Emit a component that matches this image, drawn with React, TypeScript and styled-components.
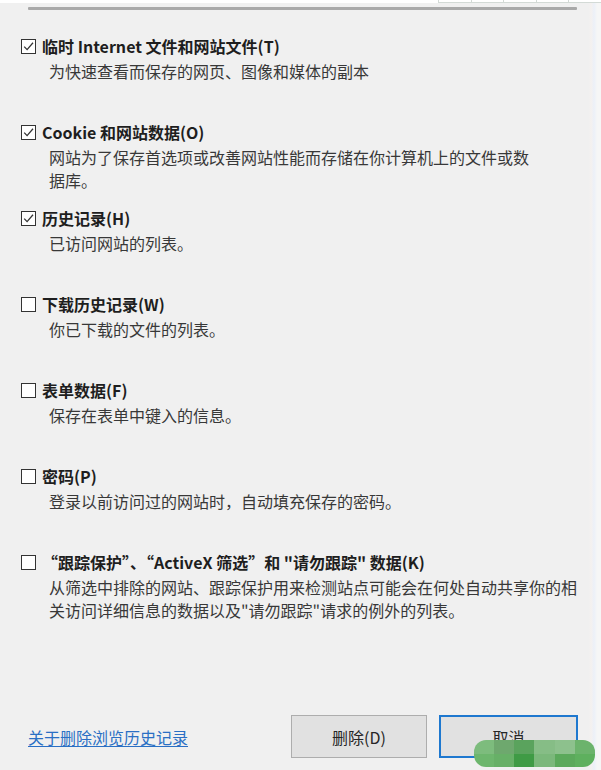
import styled, {createGlobalStyle} from 'styled-components';

type Option = {
    label: string;
    lines: string[];
    checked: boolean;
};

const options: Option[] = [
    {label: '临时 Internet 文件和网站文件(T)', lines: ['为快速查看而保存的网页、图像和媒体的副本'], checked: true},
    {label: 'Cookie 和网站数据(O)', lines: ['网站为了保存首选项或改善网站性能而存储在你计算机上的文件或数', '据库。'], checked: true},
    {label: '历史记录(H)', lines: ['已访问网站的列表。'], checked: true},
    {label: '下载历史记录(W)', lines: ['你已下载的文件的列表。'], checked: false},
    {label: '表单数据(F)', lines: ['保存在表单中键入的信息。'], checked: false},
    {label: '密码(P)', lines: ['登录以前访问过的网站时，自动填充保存的密码。'], checked: false},
    {
        label: '“跟踪保护”、“ActiveX 筛选”和 "请勿跟踪" 数据(K)',
        lines: ['从筛选中排除的网站、跟踪保护用来检测站点可能会在何处自动共享你的相', '关访问详细信息的数据以及"请勿跟踪"请求的例外的列表。'],
        checked: false,
    },
];

// mosaic watermark colours, two rows
const mosaic = [
    '#7dbc7d', '#6ea86e', '#5aa35d', '#86bd86', '#8dc18d', '#6cb36c',
    '#6db66d', '#67b067', '#3f9b45', '#7bb87b', '#5ba95b', '#5eb05e',
];

const App = () => {
    return (
        <>
            <GlobalStyle />
            <StyledWindow>
                <StyledTopStrip>
                    <StyledCells>
                        {[0, 1, 2, 3, 4].map((i) => <span key={i} />)}
                    </StyledCells>
                </StyledTopStrip>
                <StyledRule />
                <StyledList>
                    {options.map((opt) => (
                        <StyledItem key={opt.label}>
                            <StyledLabelRow>
                                <StyledBox>
                                    {opt.checked && (
                                        <svg width="13" height="13" viewBox="0 0 13 13">
                                            <path d="M2.2 6.6 L5.1 9.6 L11 2.8" fill="none" stroke="#333" strokeWidth="1.3" />
                                        </svg>
                                    )}
                                </StyledBox>
                                <StyledLabel>{opt.label}</StyledLabel>
                            </StyledLabelRow>
                            <StyledDesc>
                                {opt.lines.map((line) => <div key={line}>{line}</div>)}
                            </StyledDesc>
                        </StyledItem>
                    ))}
                </StyledList>
                <StyledFooter>
                    <StyledLink href="#">关于删除浏览历史记录</StyledLink>
                    <StyledButtons>
                        <StyledButton type="button">删除(D)</StyledButton>
                        <StyledButton type="button" $primary>取消</StyledButton>
                    </StyledButtons>
                </StyledFooter>
                <StyledMosaic>
                    {mosaic.map((c, i) => <span key={i} style={{background: c}} />)}
                </StyledMosaic>
            </StyledWindow>
        </>
    );
};

export default App;

const GlobalStyle = createGlobalStyle`
    html, body {
        margin: 0;
        padding: 0;
        background: #f0f0f0;
    }
    body {
        font-family: "Noto Sans CJK SC", "Noto Sans", sans-serif;
    }
`;

const StyledWindow = styled.div`
    position: relative;
    width: 601px;
    height: 770px;
    overflow: hidden;
    display: flex;
    flex-direction: column;
    background: linear-gradient(to right, #f0f0f0 589px, #f5f1ef 591px, #ecf0f8 594px, #f6f6f6 597px);
    box-sizing: border-box;
`;

const StyledTopStrip = styled.div`
    height: 3px;
    display: flex;
    justify-content: flex-end;
    background: #fff;
`;

const StyledCells = styled.div`
    display: flex;
    width: 163px;
    border-bottom: 1px solid #d3dad6;

    span {
        width: 33px;
        border-left: 1px solid #d3dad6;
    }
`;

const StyledRule = styled.div`
    margin: 4px 0 0 28px;
    width: 549px;
    height: 3px;
    background: #a9a9a9;
    border-radius: 1px;
`;

const StyledList = styled.div`
    display: flex;
    flex-direction: column;
    padding: 26px 0 0 21px;
`;

const StyledItem = styled.div`
    height: 86px;
    display: flex;
    flex-direction: column;
`;

const StyledLabelRow = styled.div`
    display: flex;
    align-items: center;
    gap: 6px;
    height: 20px;
`;

const StyledBox = styled.span`
    width: 15px;
    height: 15px;
    box-sizing: border-box;
    border: 1px solid #333;
    background: #fff;
    display: flex;
    align-items: center;
    justify-content: center;
`;

const StyledLabel = styled.span`
    font-size: 16px;
    font-weight: 700;
    color: #1e1e1e;
    line-height: 20px;
    white-space: nowrap;
`;

const StyledDesc = styled.div`
    margin-top: 4px;
    padding-left: 28px;
    font-size: 16px;
    line-height: 23px;
    color: #383838;
    white-space: nowrap;
`;

const StyledFooter = styled.div`
    margin-top: auto;
    padding: 0 23px 12px 28px;
    display: flex;
    align-items: flex-end;
    justify-content: space-between;
`;

const StyledLink = styled.a`
    margin-bottom: 11px;
    font-size: 16px;
    line-height: 20px;
    color: #2a6fc4;
    text-decoration: underline;
    text-underline-offset: 2px;
`;

const StyledButtons = styled.div`
    display: flex;
    gap: 12px;
`;

const StyledButton = styled.button<{$primary?: boolean}>`
    width: ${(p) => (p.$primary ? '139px' : '136px')};
    height: 43px;
    box-sizing: border-box;
    border: ${(p) => (p.$primary ? '2px solid #1e78cf' : '1px solid #adadad')};
    background: #e1e1e1;
    font-family: "Noto Sans CJK SC", "Noto Sans", sans-serif;
    font-size: 16px;
    color: #262626;
    padding: 0;
    cursor: pointer;
`;

const StyledMosaic = styled.div`
    position: absolute;
    left: 474px;
    top: 740px;
    width: 121px;
    height: 27px;
    display: grid;
    grid-template-columns: repeat(6, 1fr);
    grid-template-rows: repeat(2, 1fr);
    border-radius: 12px;
    overflow: hidden;
    filter: blur(0.6px);
`;
